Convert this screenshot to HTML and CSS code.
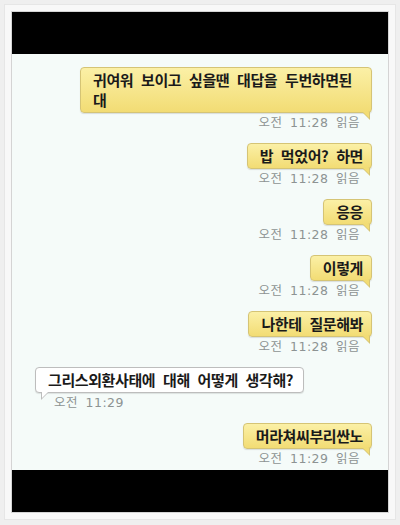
FILE: index.html
```html
<!DOCTYPE html>
<html lang="ko">
<head>
    <meta charset="UTF-8">
    <meta name="viewport" content="width=device-width, initial-scale=1.0">
    <title>대화</title>
    <link rel="stylesheet" href="styles.css">
</head>
<body>
    <div class="frame">
        <div class="screen">
            <div class="bar"></div>

            <!-- Chat log -->
            <div class="chat">
                <div class="msg me">
                    <div class="bubble wide">귀여워 보이고 싶을땐 대답을 두번하면된대</div>
                    <div class="meta">오전 11:28 읽음</div>
                </div>
                <div class="msg me">
                    <div class="bubble">밥 먹었어? 하면</div>
                    <div class="meta">오전 11:28 읽음</div>
                </div>
                <div class="msg me">
                    <div class="bubble">응응</div>
                    <div class="meta">오전 11:28 읽음</div>
                </div>
                <div class="msg me">
                    <div class="bubble">이렇게</div>
                    <div class="meta">오전 11:28 읽음</div>
                </div>
                <div class="msg me">
                    <div class="bubble">나한테 질문해봐</div>
                    <div class="meta">오전 11:28 읽음</div>
                </div>
                <div class="msg you">
                    <div class="bubble">그리스외환사태에 대해 어떻게 생각해?</div>
                    <div class="meta">오전 11:29</div>
                </div>
                <div class="msg me">
                    <div class="bubble">머라쳐씨부리싼노</div>
                    <div class="meta">오전 11:29 읽음</div>
                </div>
            </div>

            <div class="bar"></div>
        </div>
    </div>
</body>
</html>
```

FILE: styles.css
```css
body {
    margin: 0;
    background-color: #efefef;
    font-family: "Noto Sans CJK KR", sans-serif;
    color: #1a1a1a;
}

.frame {
    margin: 4px;
    padding: 6px;
    background-color: #f8f8f8;
    border: 1px solid #e6e6e6;
}

.screen {
    border: 1px solid #d4d4d4;
}

.bar {
    height: 42px;
    background-color: #000;
}

.chat {
    height: 416px;
    overflow: hidden;
    box-sizing: border-box;
    padding: 13px 16px 0 23px;
    background-color: #f5fbf9;
    display: flex;
    flex-direction: column;
    gap: 13px;
}

.msg {
    display: flex;
    flex-direction: column;
}

.msg.me {
    align-items: flex-end;
}

.msg.you {
    align-items: flex-start;
}

.bubble {
    position: relative;
    box-sizing: border-box;
    max-width: 292px;
    padding: 2px 8px 2px 12px;
    font-size: 15px;
    font-weight: 700;
    line-height: 20px;
    letter-spacing: -0.4px;
    word-spacing: 4px;
    word-break: break-all;
    border-radius: 4px;
}

.me .bubble {
    background: linear-gradient(#fbf0a6, #f2dc74);
    border: 1px solid #d5c475;
    box-shadow: 0 1px 1px rgba(0, 0, 0, 0.12);
}

.you .bubble {
    background-color: #fff;
    border: 1px solid #bdbdbd;
    box-shadow: 0 1px 1px rgba(0, 0, 0, 0.1);
    padding-right: 10px;
}

.bubble.wide {
    width: 292px;
}

/* little tails under the bubbles */
.bubble::before,
.bubble::after {
    content: "";
    position: absolute;
    width: 0;
    height: 0;
}

.me .bubble::before {
    right: 1px;
    bottom: -8px;
    border-left: 8px solid transparent;
    border-top: 8px solid #d5c475;
}

.me .bubble::after {
    right: 2px;
    bottom: -6px;
    border-left: 6px solid transparent;
    border-top: 6px solid #f2dc74;
}

.you .bubble::before {
    left: 5px;
    bottom: -8px;
    border-right: 8px solid transparent;
    border-top: 8px solid #bdbdbd;
}

.you .bubble::after {
    left: 6px;
    bottom: -6px;
    border-right: 6px solid transparent;
    border-top: 6px solid #fff;
}

.meta {
    font-family: "DejaVu Sans", "Noto Sans CJK KR", sans-serif;
    font-size: 12.5px;
    line-height: 15px;
    margin-top: 2px;
    letter-spacing: 0.5px;
    word-spacing: 3px;
    color: #8d9393;
}

.me .meta {
    margin-right: 12px;
}

.you .meta {
    margin-left: 19px;
}
```
